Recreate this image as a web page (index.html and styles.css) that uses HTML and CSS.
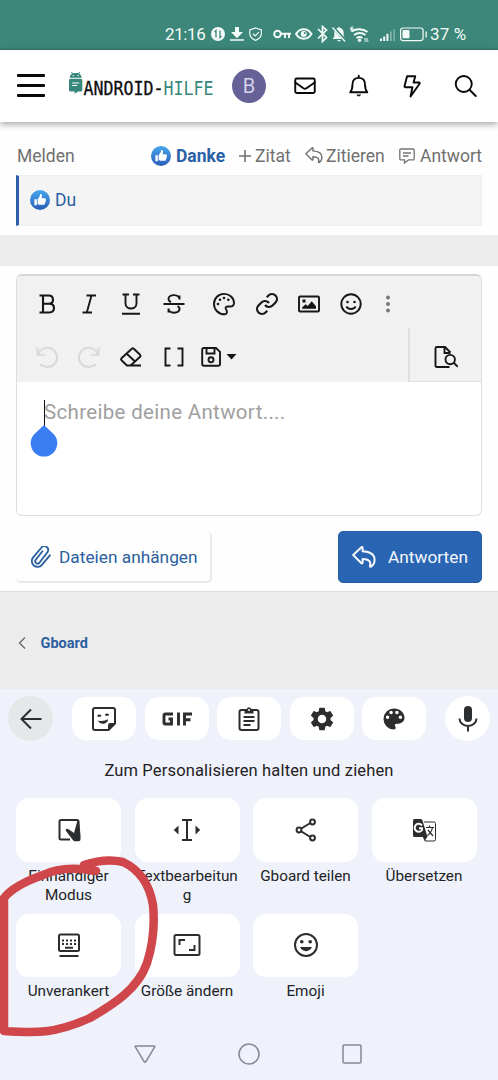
FILE: index.html
```html
<!DOCTYPE html>
<html lang="de">
<head>
<meta charset="utf-8">
<title>Android-Hilfe</title>
<link rel="stylesheet" href="styles.css">
</head>
<body>
<svg width="0" height="0" class="defs" aria-hidden="true">
  <defs>
    <linearGradient id="like-fill" x1="0" y1="0" x2="0" y2="1"><stop offset="0" stop-color="#46a7ee"/><stop offset="1" stop-color="#2a5cb8"/></linearGradient>
    <symbol id="like" viewBox="0 0 20 20">
      <circle cx="10" cy="10" r="10" fill="url(#like-fill)"/>
      <path fill="#fff" d="M4.4 9.2h2.4v6H4.4zM7.6 9.2l2-2.6c.4-.7.3-1.8.5-2.5.9-.5 2 .2 2 1.7 0 .9-.3 1.800-.5 2.500h3.100c1.300 0 1.600 1.200.9 1.800.5.6.4 1.400-.2 1.700.2.6 0 1.200-.5 1.500.1 1-.5 1.500-1.400 1.500h-3.200c-1.200 0-1.900-.5-2.700-.8z"/>
    </symbol>
    <symbol id="reply" viewBox="0 0 24 22">
      <path d="M1.200 9 9.400 1.200c.6-.5 1.200-.2 1.200.6v3.400c7.600.4 12 3 12 8.600 0 3.600-1.600 5.600-3.600 6.800-.7.3-1.200 0-1-.8 1.200-4.800-1.200-6.600-7.400-6.800v3.600c0 .8-.6 1.100-1.200.6z" fill="none" stroke="currentColor" stroke-linejoin="round"/>
    </symbol>
  </defs>
</svg>

<div class="status">
  <span class="clock">21:16</span>
  <svg class="status-left" width="54" height="18" viewBox="210 25 54 18">
    <circle cx="218" cy="34" r="7" fill="#f2fbf7"/>
    <path d="M216 37.500v-7l-1.500 1.500M220 30.500v7l1.500-1.500" class="teal-line"/>
    <path d="M235 27h4v5h4l-6 6.200-6-6.200h4zM230 39.300h14v1.500h-14z" fill="#f2fbf7"/>
    <path d="M255.600 28l5.800 1.900v3.700c0 3.200-2.300 5.300-5.800 6.800-3.500-1.500-5.800-3.600-5.800-6.800v-3.700zM253 33.800l2.200 2.100 3.700-3.700" class="thin"/>
  </svg>
  <svg class="status-mid" width="98" height="20" viewBox="273 24 98 20">
    <g fill="none" stroke="#f2fbf7" stroke-width="2">
      <circle cx="277.500" cy="34" r="3.300"/><path d="M281 33.800h10M285 34v4M289 34v4"/>
      <path d="M296 34c4-6.300 11.500-6.300 15.500 0-4 6.300-11.500 6.300-15.500 0z"/>
      <path d="M318 29.500l8.500 8.500-4 4v-15l4 3.500-8.500 8.500" stroke-width="1.700" transform="translate(0 -.5)"/>
      <path d="M351.500 31.500a14 14 0 0 1 16 .500M354 35a10 10 0 0 1 11.500 0M356.500 38a5.500 5.500 0 0 1 6 0" stroke-width="1.900"/>
    </g>
    <circle cx="303.700" cy="34" r="3" fill="#f2fbf7"/><circle cx="304.700" cy="33" r="1" fill="#3c877a"/>
    <path d="M339 26.500l1 1.500c3 .7 3.700 3 3.700 5.500v3l1.700 2.500h-12.800l1.700-2.500v-3c0-2.500.7-4.800 3.700-5.500zM337 40h4l-2 1.700z" fill="#f2fbf7"/>
    <path d="M332 26l14 15.500" stroke="#3c877a" stroke-width="3"/><path d="M332.500 27.500l12.500 14" stroke="#f2fbf7" stroke-width="1.300"/>
    <circle cx="359.500" cy="40.200" r="1.700" fill="#f2fbf7"/>
    <path d="M353.300 27h-1.500q-1 0-1 2t1.200 2 1.300-1.300-2.300-1M364 39h4M364.500 41h4" class="thin"/>
  </svg>
  <svg class="status-right" width="48" height="18" viewBox="380 25 48 18">
    <g fill="#f2fbf7"><path d="M380 38.500h2V41h-2zM383.200 36.500h2V41h-2zM386.400 33.800h2V41h-2z"/><path opacity=".4" d="M390 31.500h1.700V41H390zM393.400 29h1.400v12h-1.400z"/>
    <rect x="402.500" y="30" width="7" height="8.300" rx="1"/><rect x="425.500" y="31.500" width="1.300" height="6"/></g>
    <rect x="400.600" y="28" width="22.500" height="12.600" rx="2.500" class="thin"/>
  </svg>
  <span class="percent">37 %</span>
</div>

<header class="header">
  <div class="burger"><i></i><i></i><i></i></div>
  <svg class="logo" width="146" height="30" viewBox="68 70 146 30">
    <path d="M69.600 76.800c.2-3 2.400-4.800 6-4.800s5.900 1.800 6.100 4.800z" fill="#38877b"/>
    <path d="M71.500 71l1.500 2.500M79.700 71l-1.500 2.500" stroke="#38877b"/>
    <circle cx="73.300" cy="74.600" r=".7" fill="#fff"/><circle cx="78" cy="74.600" r=".7" fill="#fff"/>
    <path d="M69 79.300q0-1.500 1.500-1.500h10.300q1.500 0 1.500 1.500v9.700q0 1.500-1.500 1.500h-2.600l-3.500 2.300v-2.300h-4.200q-1.500 0-1.500-1.500z" fill="#38877b"/>
    <path d="M72.200 82h7M72.200 84.500h5" stroke="#fff" stroke-width="1.200"/>
    <text x="83.500" y="94.300" textLength="130" lengthAdjust="spacingAndGlyphs">ANDROID-<tspan class="logo-b">HILFE</tspan></text>
  </svg>
  <div class="avatar">B</div>
  <nav class="header-nav">
    <svg width="24" height="24" viewBox="0 0 24 24"><rect x="2.500" y="4.500" width="19.500" height="14.500" rx="1.500"/><path d="M2.500 8.500l8.200 5.800q1.500 1 3 0L22 8.500"/></svg>
    <svg width="24" height="24" viewBox="0 0 24 24"><path d="M12 1.800v2M3.500 18.200h17c-1.800-2-2.200-3-2.200-7.500 0-4.500-2.500-6.800-6.300-6.800s-6.300 2.300-6.300 6.800c0 4.500-.4 5.500-2.200 7.500z"/><path d="M9.500 20.500h5q-2.500 4-5 0z" class="solid"/></svg>
    <svg width="24" height="24" viewBox="0 0 24 24"><path d="M7.300 2.200h8.200l-1.700 6.300h5.500q1.100.1.500 1.200l-9 12.800 1.900-9.200H5.800q-1.200 0-1-1.200z"/></svg>
    <svg width="24" height="24" viewBox="0 0 24 24"><circle cx="10" cy="10" r="8"/><path d="M16 16l6 6"/></svg>
  </nav>
</header>

<section class="post">
  <div class="actions">
    <span class="report">Melden</span>
    <span class="act thanks"><svg width="20" height="20"><use href="#like"/></svg>Danke</span>
    <span class="act quote"><svg width="12" height="12" viewBox="0 0 12 12"><path d="M0 6h12M6 0v12" stroke="#707070" stroke-width="1.600"/></svg>Zitat</span>
    <span class="act cite"><svg width="18" height="16.500" stroke-width="1.900"><use href="#reply"/></svg>Zitieren</span>
    <span class="act answer"><svg width="16" height="16" viewBox="0 0 16 16" fill="none" stroke="#747474" stroke-width="1.300"><path d="M2 1h12q1.200 0 1.200 1.200v8.500q0 1.200-1.200 1.200H9.500L5.500 15v-3.100H2q-1.200 0-1.200-1.200V2.200Q.8 1 2 1zM4 5h8M4 8h5.500"/></svg>Antwort</span>
  </div>
  <div class="reaction"><svg width="20" height="20"><use href="#like"/></svg>Du</div>
</section>

<section class="reply">
  <div class="editor">
    <div class="toolbar">
      <div class="tools first">
        <svg viewBox="0 0 24 24"><path d="M4.500 3.500h9q4.500 0 4.500 4.200 0 4-4.500 4H8h6.200q4.800 0 4.800 4.400 0 4.400-4.800 4.400H4.500M8 3.500v17" stroke-width="2.100"/></svg>
        <svg viewBox="0 0 24 24"><path d="M9.500 3.500H19M5.500 20.500H15M14.500 3.500l-4.700 17" stroke-width="1.900"/></svg>
        <svg viewBox="0 0 24 24"><path d="M3.500 2.500H10M14 2.500h6.500M6.500 2.500v8.800c0 7 11 7 11 0V2.500M3 21.800h18"/></svg>
        <svg viewBox="0 0 24 24"><path d="M1.500 12h21M17.500 7.500c0-5.700-11-5.700-11-.8 0 1.600.8 2.700 2.500 3.500M15.500 14c3.500 1.800 2.500 6.700-3.200 6.700-3.600 0-5.800-1.500-5.800-4.200M17.500 3.500v4M6.500 16.500v4"/></svg>
        <svg viewBox="0 0 24 24"><path d="M12.500 22.300C6.500 22.300 2 17.500 2 12 2 6 6.500 1.900 12 1.900S22 5.800 22 11c0 2.700-1.500 3.500-4 3.500h-2.500c-1.800 0-2.500 1.500-1.300 3 1.300 2 .9 4.800-1.700 4.800z"/><g class="dots"><circle cx="6" cy="12" r="1.300"/><circle cx="8" cy="7.800" r="1.300"/><circle cx="12" cy="6" r="1.300"/><circle cx="16.300" cy="7.700" r="1.300"/></g></svg>
        <svg viewBox="0 0 24 24"><path d="M10 13a5 5 0 0 0 7.540.54l3-3a5 5 0 0 0-7.070-7.070l-1.720 1.710M14 11a5 5 0 0 0-7.540-.54l-3 3a5 5 0 0 0 7.070 7.070l1.710-1.710" stroke-width="2.200"/></svg>
        <svg viewBox="0 0 24 24"><rect x="2" y="4.500" width="20" height="15" rx="1"/><path d="M5.200 16.700v-1.500l3.500-3 2 1.700 4-4.700 4.300 5v2.500zM5.500 7.500h3v3h-3z" class="solid"/></svg>
        <svg viewBox="0 0 24 24"><circle cx="12" cy="12" r="9.700"/><path d="M7.300 14.500c2 3.300 7.400 3.300 9.400 0"/><g class="dots"><circle cx="8.500" cy="10" r="1.300"/><circle cx="15.500" cy="10" r="1.300"/></g></svg>
        <svg class="more" viewBox="0 0 24 24"><g class="gray"><circle cx="12" cy="5.500" r="2"/><circle cx="12" cy="12" r="2"/><circle cx="12" cy="18.500" r="2"/></g></svg>
      </div>
      <div class="tools second">
        <svg class="off" viewBox="0 0 24 24"><path d="M2.500 2.500v7.300h7.300M3.300 9C6 2.500 13 1.200 17.800 4.500 22.500 8 23.500 14.500 20 18.500c-3.800 4.500-10.500 4.500-15 .8" /></svg>
        <svg class="off" viewBox="0 0 24 24"><path d="M21.500 2.500v7.300h-7.300M20.700 9C18 2.500 11 1.200 6.200 4.500 1.500 8 .5 14.500 4 18.500c3.800 4.500 10.500 4.500 15 .8" /></svg>
        <svg viewBox="0 0 24 24"><path d="M22 20.500H8L2.500 15.200q-1-1 0-2L12.800 3.800q1-1 2 0l6.300 6q1 1 0 2l-9.500 8.700M7.500 8.500l8 7.500"/></svg>
        <svg viewBox="0 0 24 24"><path d="M8.500 3.500h-5v17h5M15.500 3.500h5v17h-5"/></svg>
        <svg viewBox="0 0 24 24"><path d="M5 3h12l4 3.800V19q0 1.800-1.800 1.800H5q-1.800 0-1.800-1.800V4.800Q3.200 3 5 3zM7.500 3v5.500h8V3"/><circle cx="12" cy="14.800" r="2.500"/></svg>
        <svg class="caret-down" viewBox="0 0 10 6"><path d="M0 0h10L5 5.500z" class="solid"/></svg>
        <div class="preview"><svg viewBox="0 0 24 24"><path d="M10 22H2.800q-1.300 0-1.300-1.300V3.300Q1.500 2 2.800 2H11l5.500 5.500M10.500 2v6h6M10 22h5.500M19.500 17.500l4.300 4.300"/><circle cx="16.200" cy="14.600" r="4.700"/></svg></div>
      </div>
    </div>
    <div class="input"><span class="placeholder">Schreibe deine Antwort....</span>
      <i class="cursor"></i>
      <svg class="handle" width="28" height="34" viewBox="0 0 28 34"><path d="M14 0l10 9.500a13.300 13.300 0 1 1-20 0z" fill="#397ef3"/></svg>
    </div>
  </div>
  <div class="buttons">
    <div class="attach"><svg width="20" height="22" viewBox="1.500 0.500 21 23"><path d="M21.440 11.050l-9.190 9.190a6 6 0 0 1-8.490-8.490l9.190-9.190a4 4 0 0 1 6.600 4.500l-9.500 10.500a2.500 2.500 0 0 1-4-3l8-8.500" transform="rotate(-5 12 12)" fill="none" stroke="#2b609e" stroke-width="1.900" stroke-linecap="round"/></svg>Dateien anhängen</div>
    <div class="submit"><svg width="24" height="22" stroke-width="2"><use href="#reply"/></svg>Antworten</div>
  </div>
</section>

<div class="crumb"><svg width="8" height="12" viewBox="0 0 8 12"><path d="M7 .5L1.500 6 7 11.500" fill="none" stroke="#666" stroke-width="1.300"/></svg>Gboard</div>

<section class="keyboard">
  <div class="strip">
    <div class="round back"><svg width="24" height="24" viewBox="0 0 24 24"><path d="M22.500 12H3M12 2.500L2.500 12l9.500 9.500" class="line"/></svg></div>
    <div class="chips">
      <div class="chip"><svg width="26" height="26" viewBox="0 0 26 26"><path d="M4 2h18q2 0 2 2v13.500L17.500 24H4q-2 0-2-2V4q0-2 2-2z" class="line"/><path d="M24 17h-4.500q-2.500 0-2.500 2.500V24zM7 14.500q5.500 1.500 10-1.300c0 5-8 6.500-10 1.300z"/><path d="M6.800 10.500q1.500-2 3 0M14.500 9.500q1.500-2 3 0" class="line"/></svg></div>
      <div class="chip"><svg width="32" height="16" viewBox="0 0 32 16"><g fill="none" stroke="#2c2d2f" stroke-width="2.900"><path d="M12 3H4.500Q3 3 3 4.500v7Q3 13 4.500 13h6V8H7.500M17.500 1.500v13M23.500 14.500V3H31M23.500 8.800h6"/></g></svg></div>
      <div class="chip"><svg width="24" height="26" viewBox="0 0 24 26"><rect x="2.500" y="4" width="19" height="20" rx="2" class="line"/><path d="M7.500 3h2q2.500-3.500 5 0h2v4.500h-9z"/><circle cx="12" cy="4" r="1" fill="#fff"/><path d="M6.500 11h11M6.500 15h11M6.500 19h7" class="line"/></svg></div>
      <div class="chip"><svg width="26" height="26" viewBox="1 1 22 22"><path d="M19.140 12.940c.04-.3.060-.61.060-.94s-.02-.64-.07-.94l2.030-1.580a.49.49 0 0 0 .12-.61l-1.920-3.320a.49.49 0 0 0-.59-.22l-2.390.96a7 7 0 0 0-1.620-.94L14.400 2.810a.48.48 0 0 0-.48-.41h-3.840a.48.48 0 0 0-.47.410l-.36 2.540a7 7 0 0 0-1.620.94l-2.390-.96a.49.49 0 0 0-.59.220L2.740 8.870a.48.480 0 0 0 .12.610l2.030 1.580a7 7 0 0 0 0 1.880l-2.030 1.580a.49.490 0 0 0-.12.610l1.920 3.320c.12.220.37.290.59.220l2.390-.96c.5.380 1.030.7 1.620.94l.36 2.540c.05.240.240.410.48.410h3.840c.24 0 .44-.17.470-.41l.36-2.540a7 7 0 0 0 1.620-.94l2.390.96c.22.080.47 0 .59-.22l1.920-3.320a.480.480 0 0 0-.12-.61zM12 15.600a3.600 3.600 0 1 1 0-7.200 3.600 3.600 0 0 1 0 7.200z"/></svg></div>
      <div class="chip"><svg width="28" height="28" viewBox="0 0 24 24"><path d="M12 3a9 9 0 0 0 0 18c.83 0 1.500-.67 1.500-1.500 0-.39-.15-.74-.39-1.010-.23-.26-.38-.61-.38-.99 0-.83.67-1.500 1.500-1.500H16c2.760 0 5-2.240 5-5 0-4.420-4.030-8-9-8zm-5.500 9a1.500 1.500 0 1 1 0-3 1.500 1.500 0 0 1 0 3zm3-4a1.500 1.500 0 1 1 0-3 1.500 1.500 0 0 1 0 3zm5 0a1.500 1.500 0 1 1 0-3 1.500 1.500 0 0 1 0 3zm3 4a1.500 1.500 0 1 1 0-3 1.500 1.500 0 0 1 0 3z"/></svg></div>
    </div>
    <div class="round"><svg width="22" height="28" viewBox="0 0 22 28"><rect x="7" y="1" width="8" height="16" rx="4"/><path d="M2.500 13.500a8.500 7.500 0 0 0 17 0M11 21v5.500" class="line"/></svg></div>
  </div>
  <h2 class="hint">Zum Personalisieren halten und ziehen</h2>
  <div class="grid">
    <div class="item"><div class="tile"><svg width="26" height="26" viewBox="0 0 26 26"><path d="M14 22.500H5q-1.500 0-1.500-1.500V4.500Q3.500 3 5 3h16q1.500 0 1.500 1.500V13" class="line"/><path d="M21.500 3.500q1.500.3 1.700 2L24.500 18v4.500q0 1.800-1.800 1.800H19q-1.200 0-2-1L10 14q-1-1.500.5-2.200 1-.4 2 .4l5.500 3.800z"/></svg></div><span>Einhändiger Modus</span></div>
    <div class="item"><div class="tile"><svg width="28" height="24" viewBox="0 0 28 24"><path d="M9 2h10M9 22h10M14 2v20" class="line"/><path d="M5.500 7.500v9L.8 12zM22.500 7.500v9l4.700-4.500z"/></svg></div><span>Textbearbeitung</span></div>
    <div class="item"><div class="tile"><svg width="24" height="26" viewBox="0 0 24 26"><path d="M18 5L5 13l13 8" class="line"/><g fill="#fff" stroke="#2c2d2f" stroke-width="2"><circle cx="5" cy="13" r="2.400"/><circle cx="18.500" cy="5" r="2.400"/><circle cx="18.500" cy="21" r="2.400"/></g></svg></div><span>Gboard teilen</span></div>
    <div class="item"><div class="tile"><svg width="26" height="26" viewBox="0 0 26 26"><path d="M13 5h10q1.500 0 1.500 1.500v16q0 1.500-1.500 1.500h-9l-2-5" fill="none" stroke="#2c2d2f"/><path d="M3.500 2H10q1 0 1.500 1.500L16.500 20H3.500Q2 20 2 18.500v-15Q2 2 3.500 2zM12.500 20h3.800L14 23.500z"/><path d="M11 8.500A4 4 0 1 0 11 13v-1.700H8" fill="none" stroke="#fff" stroke-width="2"/><path d="M15 10.500h8M18.500 8.500v2M21.500 10.500q-1 5-5 8M17 13l5 6" fill="none" stroke="#2c2d2f" stroke-width="1.200"/></svg></div><span>Übersetzen</span></div>
    <div class="item"><div class="tile"><svg width="26" height="26" viewBox="0 0 26 26"><rect x="3" y="2.500" width="20" height="16.500" rx="1.500" class="line"/><path d="M6 8.500h14M6 12h14" fill="none" stroke="#2c2d2f" stroke-width="2" stroke-dasharray="2 2"/><path d="M9 15.800h8M3.500 24h19" class="line"/></svg></div><span>Unverankert</span></div>
    <div class="item"><div class="tile"><svg width="28" height="24" viewBox="0 0 28 24"><rect x="1.500" y="2" width="25" height="20" rx="1.500" class="line"/><path d="M6.500 12V7H12M21.500 12v5H16" class="line"/></svg></div><span>Größe ändern</span></div>
    <div class="item"><div class="tile"><svg width="26" height="26" viewBox="0 0 26 26"><circle cx="13" cy="13" r="11" class="line"/><circle cx="8.800" cy="9.800" r="1.800"/><circle cx="17.200" cy="9.800" r="1.800"/><path d="M7 15h12c-2 5.500-10 5.500-12 0z"/></svg></div><span>Emoji</span></div>
  </div>
  <div class="sysnav">
    <svg width="24" height="24" viewBox="0 0 24 24"><path d="M2.600 4h18.800q.8 0 .3.800l-9 15q-.7 1-1.400 0l-9-15q-.5-.8.300-.8z"/></svg>
    <svg width="24" height="24" viewBox="0 0 24 24"><circle cx="12" cy="12" r="10"/></svg>
    <svg width="24" height="24" viewBox="0 0 24 24"><rect x="3" y="3" width="18" height="18" rx="1"/></svg>
  </div>
</section>
<svg class="marker" width="170" height="190" viewBox="0 850 170 190"><path d="M96 871C75 867 57 868 43 875C26 881 11 889 4 898V1031C36 1033 55 1034 90 1018C114 1004 138 989 147 963C153 944 155 925 153 905C150 887 142 871 123 862C110 859 96 861 84 865"/></svg>
</body>
</html>
```
FILE: styles.css
```css
* { box-sizing: border-box; }
body { margin: 0; width: 498px; height: 1080px; overflow: hidden; position: relative; background: #fefefe; font-family: Roboto, "Liberation Sans", sans-serif; color: #707070; }
svg { display: block; flex: none; }
.defs { position: absolute; }

.status { height: 50px; padding: 18px 0 0 165px; display: flex; align-items: center; background: #3c877a; border-bottom: 1px solid #347568; color: #f2fbf7; }
.clock, .percent { font-size: 17px; line-height: 32px; white-space: nowrap; }
.clock { width: 45px; letter-spacing: -.4px; }
.status-mid { margin-left: 9px; }
.status-right { margin-left: 9px; }
.percent { margin-left: 2px; letter-spacing: .15px; }
.thin { fill: none; stroke: #f2fbf7; stroke-width: 1.2; }
.teal-line { fill: none; stroke: #3c877a; stroke-width: 1.3; }

.header { height: 72px; padding-left: 17px; padding-bottom: 1px; display: flex; align-items: center; background: #fff; position: relative; box-shadow: 0 2px 7px rgba(0,0,0,.38); }
.burger { width: 28px; margin-right: 23px; display: flex; flex-direction: column; gap: 6.5px; }
.burger i { height: 3.5px; border-radius: 1px; background: #080808; }
.logo { margin-right: 18px; overflow: visible; }
.logo text { font-family: "DejaVu Sans Mono", monospace; font-size: 20px; fill: #101010; stroke: #101010; stroke-width: .35; }
.logo .logo-b { fill: #38877b; stroke: none; }
.avatar { width: 34px; height: 34px; border-radius: 50%; background: #666298; color: #d4d2ec; font-size: 20px; line-height: 34px; text-align: center; }
.header-nav { margin-left: 12px; display: flex; }
.header-nav svg { width: 53.5px; fill: none; stroke: #090909; stroke-width: 1.9; stroke-linejoin: round; stroke-linecap: round; }
.solid { fill: #151515; stroke: none; }

.post { height: 113px; padding: 20px 16px 0; font-size: 17.5px; }
.actions { height: 27px; display: flex; align-items: center; padding-left: 1px; }
.act { display: flex; align-items: center; white-space: nowrap; }
.report { width: 134px; }
.thanks { width: 88px; gap: 5px; font-weight: 700; color: #2b61a6; }
.quote { width: 66px; gap: 4px; }
.cite { width: 94px; gap: 3px; }
.answer { gap: 5px; }
.reaction { margin-top: 6px; height: 51px; display: flex; align-items: center; gap: 5px; padding: 0 0 1px 11px; border: 1px solid #eceff3; border-left: 3px solid #2c61a5; background: #f4f4f4; color: #2c61a5; }

.reply { height: 356px; padding: 39px 16px 0; background: linear-gradient(#ececec 31px, #fefefe 31px); }
.editor { height: 242px; border: 1px solid #dedede; border-top: 2px solid #d5d5d5; border-radius: 6px; background: #fff; }
.toolbar { height: 106px; background: #f1f1f1; border-radius: 5px 5px 0 0; }
.tools { height: 52px; display: flex; align-items: center; padding-left: 17.5px; padding-top: 4px; }
.tools svg { width: 24px; height: 24px; margin-right: 18.4px; fill: none; stroke: #171717; stroke-width: 1.9; }
.tools svg:nth-child(4) { margin-right: 26.5px; }
.tools .more { margin-left: -6px; margin-right: 0; }
.dots { fill: #171717; stroke: none; }
.gray { fill: #777; stroke: none; }
.tools .off { stroke: #d9d9d9; }
.second { height: 54px; padding-top: 0; }
.second svg { margin-top: 4px; }
.tools.second svg:nth-child(4) { margin-right: 13px; }
.tools.second svg:nth-child(5) { margin-right: 3px; }
.tools.second .caret-down { width: 11px; height: 6px; margin-right: 0; }
.preview { height: 54px; margin-left: auto; width: 73px; border-left: 2px solid #dedede; border-bottom: 1px solid #e3e3e3; padding: 0 0 0 24px; display: flex; align-items: center; }
.input { position: relative; padding: 18px 0 0 27px; font-size: 20.5px; line-height: 25px; letter-spacing: .32px; color: #a0a0a0; white-space: nowrap; }
.cursor { position: absolute; left: 26.5px; top: 18px; width: 1.5px; height: 26px; background: #111; }
.handle { position: absolute; left: 12.5px; top: 43px; }
.buttons { padding-top: 15px; display: flex; justify-content: space-between; font-size: 17.3px; }
.attach { width: 196px; height: 51px; margin-top: 1px; display: flex; align-items: center; gap: 8px; padding-left: 15px; border: solid #e9e9e9; border-width: 0 2px 2px 0; border-radius: 5px; color: #2b609e; white-space: nowrap; }
.submit { width: 144px; height: 52px; display: flex; align-items: center; gap: 12px; padding-left: 13px; border-radius: 5px; border: 1px solid #265da6; background: #2a65b3; color: #f4f7fb; }

.crumb { height: 98px; padding: 5px 0 0 18px; display: flex; align-items: center; gap: 14.5px; background: #ececec; border-top: 1px solid #dcdcdc; color: #2c5fa0; font-size: 14.5px; font-weight: 700; }

.keyboard { height: 391px; padding-top: 7px; background: #eff2fa; color: #222427; }
.strip { display: flex; justify-content: space-between; align-items: center; padding: 0 8px; height: 45px; }
.round { width: 45px; height: 45px; border-radius: 50%; background: #fff; display: flex; align-items: center; justify-content: center; }
.back { background: #e5e7e9; }
.chips { display: flex; gap: 8.5px; }
.chip { width: 64px; height: 43px; border-radius: 14px; background: #fff; display: flex; align-items: center; justify-content: center; }
.keyboard svg { fill: #2c2d2f; }
.keyboard .line { fill: none; stroke: #2c2d2f; stroke-width: 2; }
.hint { margin: 18px 0 0; text-align: center; font: 400 16.5px/24px Roboto, sans-serif; letter-spacing: .15px; color: #1f2124; }
.grid { margin-top: 15px; padding: 0 21px 0 16px; display: grid; grid-template-columns: repeat(4, 105px); column-gap: 13.5px; grid-auto-rows: 115.5px; }
.tile { height: 63.5px; border-radius: 13px; background: #fff; display: flex; align-items: center; justify-content: center; }
.item span { display: block; margin: 5px 1px 0; text-align: center; font-size: 15.3px; line-height: 19px; overflow-wrap: anywhere; }
.keyboard .sysnav { margin-top: 12.5px; padding-left: 133px; display: flex; gap: 79.5px; }
.keyboard .sysnav svg { fill: none; stroke: #858891; stroke-width: 1.5; }
.marker { position: absolute; left: 0; top: 850px; fill: none; stroke: #cf474b; stroke-width: 8.5; stroke-linecap: round; stroke-linejoin: round; }
```
